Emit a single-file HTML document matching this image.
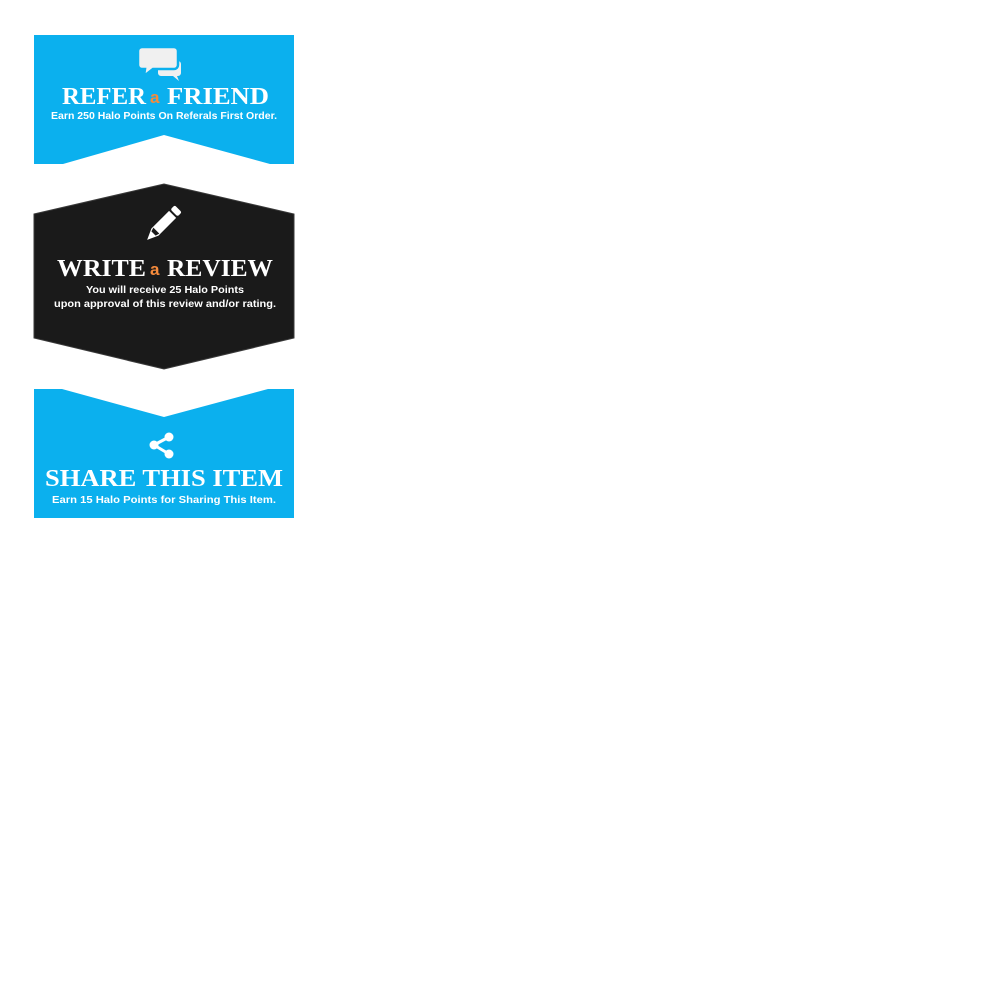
<!DOCTYPE html>
<html><head><style>
html,body{margin:0;padding:0;background:#fff;width:1000px;height:1000px;overflow:hidden}
svg{position:absolute;left:0;top:0}
.t{font-family:"Liberation Serif",serif;font-weight:bold;fill:#fff}
.s{font-family:"Liberation Sans",sans-serif;fill:#fff;font-size:10.5px;font-weight:bold}
.a{font-family:"Liberation Sans",sans-serif;font-weight:bold;fill:#f68b3c}
</style></head><body>
<svg width="1000" height="1000" viewBox="0 0 1000 1000">
<!-- panel 1 -->
<path d="M34 35H294V164H270L164 135L63 164H34Z" fill="#0bb0ee"/>
<path d="M161 61h17a3 3 0 0 1 3 3v9a3 3 0 0 1-3 3h-1l2 5-6-5h-12a3 3 0 0 1-3-3v-9a3 3 0 0 1 3-3z" fill="#f0f0f0"/>
<path d="M142 47h32a4 4 0 0 1 4 4v14a4 4 0 0 1-4 4h-21l-9 7 1-7h-3a4 4 0 0 1-4-4v-14a4 4 0 0 1 4-4z" fill="#f0f0f0" stroke="#0bb0ee" stroke-width="2.5"/>
<text class="t" x="62" y="104" font-size="24" textLength="84" lengthAdjust="spacingAndGlyphs">REFER</text>
<text class="a" x="150" y="103" font-size="17">a</text>
<text class="t" x="167" y="104" font-size="24" textLength="102" lengthAdjust="spacingAndGlyphs">FRIEND</text>
<text class="s" x="164" y="119" text-anchor="middle" textLength="226" lengthAdjust="spacingAndGlyphs">Earn 250 Halo Points On Referals First Order.</text>
<!-- panel 2 -->
<path d="M34 214L164 184L294 214V338L164 369L34 338Z" fill="#1a1a1a" stroke="#3a3a3a" stroke-width="1"/>
<g transform="translate(162 225) rotate(45)">
<rect x="-5" y="-23" width="10" height="6" rx="2" fill="#fff"/>
<path d="M-5 -15H5V10L0 21L-5 10Z" fill="#fff"/>
<path d="M-4.2 8H4.2L3 12H-3Z" fill="#1a1a1a"/>
</g>
<text class="t" x="57" y="276" font-size="24" textLength="89" lengthAdjust="spacingAndGlyphs">WRITE</text>
<text class="a" x="150" y="275" font-size="17">a</text>
<text class="t" x="167" y="276" font-size="24" textLength="106" lengthAdjust="spacingAndGlyphs">REVIEW</text>
<text class="s" x="165" y="293" text-anchor="middle" textLength="158" lengthAdjust="spacingAndGlyphs">You will receive 25 Halo Points</text>
<text class="s" x="165" y="307" text-anchor="middle" textLength="222" lengthAdjust="spacingAndGlyphs">upon approval of this review and/or rating.</text>
<!-- panel 3 -->
<path d="M34 389H62L164 417L268 389H294V518H34Z" fill="#0bb0ee"/>
<g fill="#fff" stroke="#fff">
<line x1="169" y1="437" x2="154" y2="445" stroke-width="3"/>
<line x1="169" y1="454" x2="154" y2="445" stroke-width="3"/>
<circle cx="169" cy="437" r="4.5" stroke="none"/>
<circle cx="154" cy="445" r="4.5" stroke="none"/>
<circle cx="169" cy="454" r="4.5" stroke="none"/>
</g>
<text class="t" x="164" y="486" font-size="24" text-anchor="middle" textLength="238" lengthAdjust="spacingAndGlyphs">SHARE THIS ITEM</text>
<text class="s" x="164" y="503" text-anchor="middle" textLength="224" lengthAdjust="spacingAndGlyphs">Earn 15 Halo Points for Sharing This Item.</text>
</svg>
</body></html>
